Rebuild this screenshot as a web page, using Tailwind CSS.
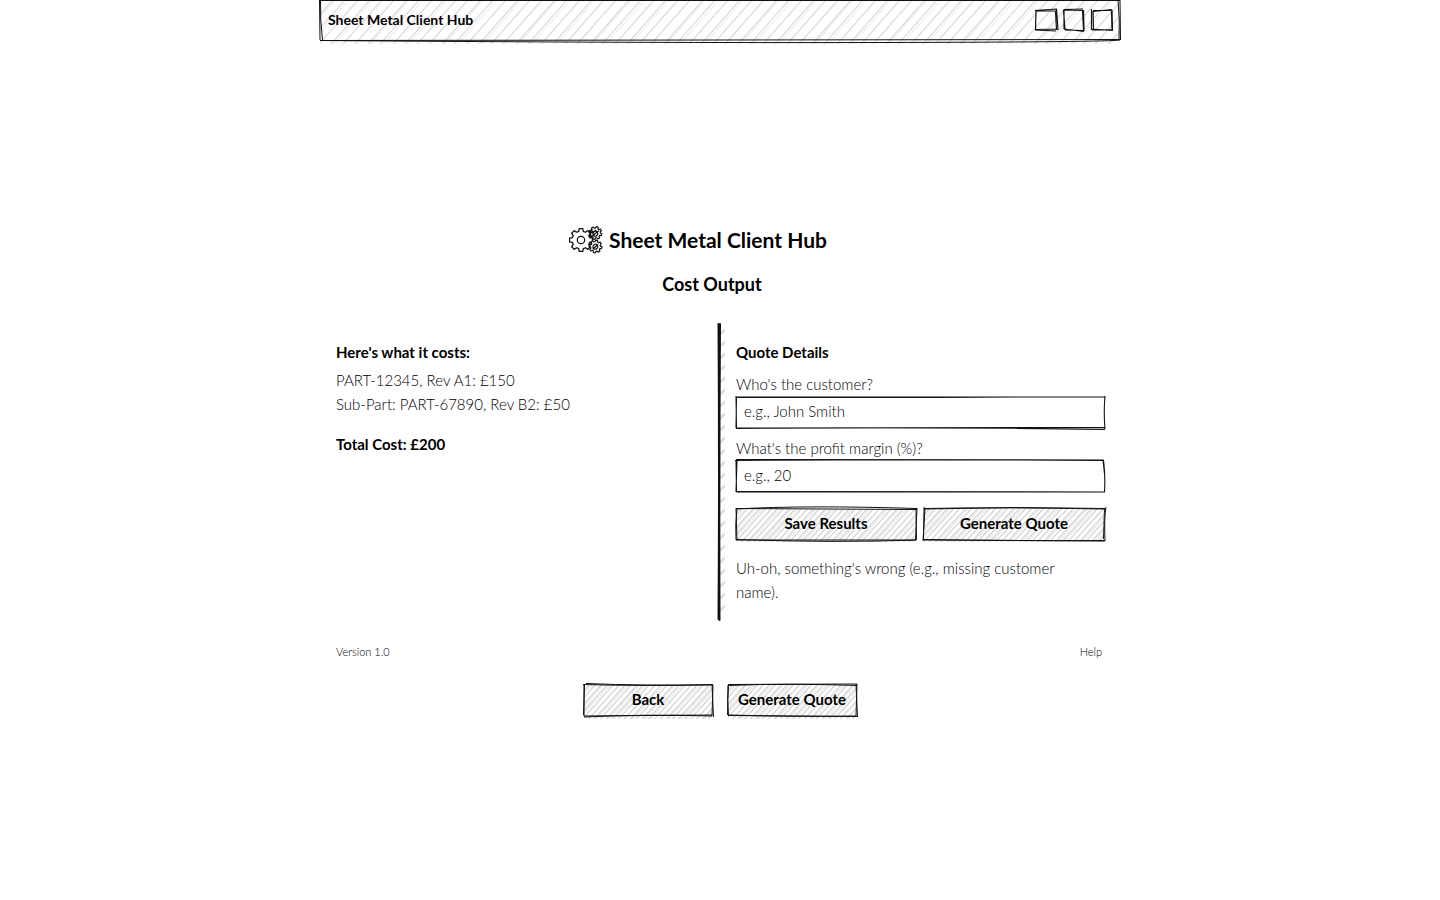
<!DOCTYPE html>
<html lang="en">
<head>
<meta charset="utf-8">
<meta name="viewport" content="width=device-width, initial-scale=1">
<title>Sheet Metal Client Hub</title>
<script src="https://cdn.jsdelivr.net/npm/@tailwindcss/browser@4"></script>
</head>
<body class="bg-white text-black font-['Lato','Open_Sans',sans-serif] text-[15px] leading-6 font-light">
<svg class="absolute w-0 h-0" aria-hidden="true">
  <defs>
    <!-- Pencil hatching: wide for the header, tight for buttons -->
    <pattern id="hatch-wide" width="74" height="84" patternUnits="userSpaceOnUse">
      <g stroke="#dadada" stroke-width="1.2" fill="none">
        <path d="M-74 84L0 0M-61 84L13 0M-49 84L25 0M-36 84L38 0M-24 84L50 0M-12 84L62 0M0 84L74 0M13 84L87 0M25 84L99 0M38 84L112 0M50 84L124 0M62 84L136 0M74 84L148 0"/>
        <path stroke="#f0f0f0" d="M-58 84L15 0M-46 84L29 0M-20 84L53 0M16 84L89 0M28 84L103 0M54 84L127 0"/>
      </g>
    </pattern>
    <pattern id="hatch-tight" width="36" height="40" patternUnits="userSpaceOnUse">
      <g stroke="#d2d2d2" stroke-width="1.2" fill="none">
        <path d="M-36 40L0 0M-30 40L6 0M-24 40L12 0M-18 40L18 0M-12 40L24 0M-6 40L30 0M0 40L36 0M6 40L42 0M12 40L48 0M18 40L54 0M24 40L60 0M30 40L66 0"/>
        <path stroke="#e8e8e8" d="M-28 40L9 0M-15 40L20 0M-10 40L27 0M8 40L45 0M21 40L56 0M26 40L63 0"/>
      </g>
    </pattern>
    <pattern id="ticks" width="16" height="12" patternUnits="userSpaceOnUse">
      <path d="M3 10L9 5M4 11L9 7" stroke="#c4c4c4" fill="none"/>
    </pattern>
  </defs>
</svg>

<div class="min-h-screen flex flex-col w-full max-w-[800px] mx-auto">
  <header class="relative h-10 px-2 flex items-center justify-between">
    <svg class="absolute inset-0 w-full h-full overflow-visible" aria-hidden="true">
      <rect y="1" width="100%" height="43" fill="url(#hatch-wide)"/>
      <svg width="100%" height="100%" viewBox="0 0 800 40" preserveAspectRatio="none" class="overflow-visible" fill="none" stroke="#111">
        <path vector-effect="non-scaling-stroke" d="M0 0.500L800 0.500M0.500 0Q0 20 2.500 40M-0.500 0L0 40M798 0Q800 20 799 40M800 0L800.500 40M0 40.500L800 39.500"/>
        <path vector-effect="non-scaling-stroke" d="M0 40.500Q330 43 560 42.500T800 40"/>
      </svg>
    </svg>
    <span class="relative font-bold text-sm">Sheet Metal Client Hub</span>
    <span class="relative flex gap-2" aria-hidden="true">
      <svg class="size-5 overflow-visible" viewBox="0 0 20 20" fill="none" stroke="#111" stroke-width="1.200"><path d="M-1 0.500L21 -1M0 1L20 1M0 0L-0.500 20M20.500 -1L22 20M19.500 1L20.500 20M-1 20L20 21M0 19.500L21 19"/></svg>
      <svg class="size-5 overflow-visible" viewBox="0 0 20 20" fill="none" stroke="#111" stroke-width="1.200"><path d="M-1 0L20 0.500M0 -0.500L19 -1M-0.500 0L1 20M0 1L0 19M19.500 0L20 21M18.500 0L19.500 20M0 19L20 21.500M1 20L20 20.500"/></svg>
      <svg class="size-5 overflow-visible" viewBox="0 0 20 20" fill="none" stroke="#111" stroke-width="1.200"><path d="M1 1.500L20 -0.500M1 0.500L19 0.500M-0.500 -1L-0.500 20M1 1L1.500 19M20 0L20.500 20M19.500 1L20 19M-1 19L21 20.500M0 20L20 19.500"/></svg>
    </span>
  </header>

  <main class="flex-1 flex flex-col justify-center">
    <h1 class="flex items-center justify-center gap-1.5 pr-11 text-[21px] leading-8 font-bold">
      <svg class="w-[34px] h-7" viewBox="0 0 34 28" fill="none" stroke="#111" stroke-linejoin="round" aria-hidden="true">
        <defs>
          <path id="gear" vector-effect="non-scaling-stroke" d="M8.200 -2.200L10.900 -1.700L10.900 1.700L8.200 2.200L7.400 4.200L8.900 6.500L6.500 8.900L4.200 7.400L2.200 8.200L1.700 10.900L-1.700 10.900L-2.200 8.200L-4.200 7.400L-6.500 8.900L-8.900 6.500L-7.400 4.200L-8.200 2.200L-10.900 1.700L-10.900 -1.700L-8.200 -2.200L-7.400 -4.200L-8.900 -6.500L-6.500 -8.900L-4.200 -7.400L-2.200 -8.200L-1.700 -10.900L1.700 -10.900L2.200 -8.200L4.200 -7.400L6.500 -8.900L8.900 -6.500L7.400 -4.200Z"/>
        </defs>
        <use href="#gear" stroke-width="1.300" transform="translate(12 14) scale(1.050)"/>
        <circle cx="12" cy="14" r="3.700" stroke-width="1.200"/>
        <g fill="#fff" stroke-width="1.200">
          <use href="#gear" transform="translate(26.500 7) rotate(15) scale(.58)"/>
          <use href="#gear" transform="translate(26.500 20.500) rotate(10) scale(.58)"/>
        </g>
        <path stroke-width="1.200" d="M24 9.500Q23.500 5.500 27 5Q30 7 28 9.500Q26 11 24 9.500M23.500 10L30 4.500M23 7L27 4M24 22.500Q23.500 18.500 27 18Q30 20 28 22.500Q26 24 24 22.500M24 23L29 18.500"/>
        <path stroke-width="1.600" d="M20.500 6L23 3.500M20.500 9L23.500 11M21 19L23 17.500M20.500 8L24 5"/>
      </svg>
      Sheet Metal Client Hub
    </h1>
    <h2 class="mt-3.5 pr-4 text-center text-lg leading-7 font-bold">Cost Output</h2>

    <div class="mt-[26px] grid grid-cols-2">
      <section class="p-4">
        <h3 class="font-bold">Here's what it costs:</h3>
        <ul class="mt-1">
          <li>PART-12345, Rev A1: £150</li>
          <li>Sub-Part: PART-67890, Rev B2: £50</li>
        </ul>
        <p class="mt-4 font-bold">Total Cost: £200</p>
      </section>

      <section class="relative p-4">
        <svg class="absolute -left-1 top-0 w-3 h-full overflow-visible" aria-hidden="true">
          <rect x="3" width="7" height="98%" fill="url(#ticks)"/>
          <svg width="12" height="100%" viewBox="0 0 12 296" preserveAspectRatio="none" class="overflow-visible" fill="none" stroke="#111">
            <path vector-effect="non-scaling-stroke" stroke-width="2" stroke-linecap="round" d="M2.500 0Q3.500 150 2.500 295M4 0Q3 150 3.500 296"/>
          </svg>
        </svg>
        <h3 class="font-bold">Quote Details</h3>
        <form>
          <label class="block mt-2" for="customer">Who's the customer?</label>
          <div class="relative h-8">
            <input id="customer" type="text" placeholder="e.g., John Smith" class="w-full h-full px-2 pb-0.5 bg-transparent outline-none placeholder:text-black">
            <svg class="absolute inset-0 w-full h-full overflow-visible pointer-events-none" viewBox="0 0 368 32" preserveAspectRatio="none" fill="none" stroke="#111" aria-hidden="true">
              <path vector-effect="non-scaling-stroke" stroke-width="1.100" d="M0 1.500L200 1.500L369 0.500M0 1L369 1M0 0L0.500 33M0.500 1L0 32M369 0Q367.500 16 369 33M0 32L369 31.500M0 32.500Q200 31 369 33.500"/>
            </svg>
          </div>
          <label class="block mt-2" for="margin">What's the profit margin (%)?</label>
          <div class="relative h-8">
            <input id="margin" type="text" placeholder="e.g., 20" class="w-full h-full px-2 pb-0.5 bg-transparent outline-none placeholder:text-black">
            <svg class="absolute inset-0 w-full h-full overflow-visible pointer-events-none" viewBox="0 0 368 32" preserveAspectRatio="none" fill="none" stroke="#111" aria-hidden="true">
              <path vector-effect="non-scaling-stroke" stroke-width="1.100" d="M-1 0.500Q180 -1 368 0.500M0 -0.500L368 0M0 0L0.500 32M1 0L0 32M367.500 0Q369.500 16 368.500 32M367 0L368.500 14M0 32L369 32M0 31.500L369 32"/>
            </svg>
          </div>
          <div class="mt-4 grid grid-cols-2 gap-2">
            <button type="button" class="relative h-8 pb-0.5 font-bold cursor-pointer">
              <svg class="absolute inset-0 w-full h-full overflow-visible" aria-hidden="true">
                <rect y="1" width="100%" height="33" fill="url(#hatch-tight)"/>
                <svg width="100%" height="100%" viewBox="0 0 180 32" preserveAspectRatio="none" class="overflow-visible" fill="none" stroke="#111">
                  <path vector-effect="non-scaling-stroke" d="M0 0.500L181 1.500M0 1Q70 -3 181 0.500M0 0L1 32M1 1Q-1 16 0 32M181 0L179.500 32M180 1L180.500 32M0 32L180 32M0 31.500Q100 35 180 32"/>
                </svg>
              </svg>
              <span class="relative">Save Results</span>
            </button>
            <button type="button" class="relative h-8 pb-0.5 font-bold cursor-pointer">
              <svg class="absolute inset-0 w-full h-full overflow-visible" aria-hidden="true">
                <rect y="1" width="100%" height="33" fill="url(#hatch-tight)"/>
                <svg width="100%" height="100%" viewBox="0 0 180 32" preserveAspectRatio="none" class="overflow-visible" fill="none" stroke="#111">
                  <path vector-effect="non-scaling-stroke" d="M0 0.500Q80 -1 181 1M0 1L90 -0.500L181 0.500M0 -1L-0.500 32M1 0L-1 33M182 -1Q180 10 181 33M180.500 0L179.500 31M-1 32L181 33M0 31.500Q100 33 181 32.500"/>
                </svg>
              </svg>
              <span class="relative">Generate Quote</span>
            </button>
          </div>
          <p class="mt-4 pr-8">Uh-oh, something's wrong (e.g., missing customer name).</p>
        </form>
      </section>
    </div>

    <footer class="mt-6 pl-4 pr-[18px] flex justify-between text-[11px] leading-4">
      <span>Version 1.0</span>
      <a href="#help">Help</a>
    </footer>

    <div class="mt-6 flex justify-center gap-4">
      <button type="button" class="relative h-8 w-32 pb-0.5 font-bold cursor-pointer">
        <svg class="absolute inset-0 w-full h-full overflow-visible" aria-hidden="true">
          <rect y="1" width="100%" height="34" fill="url(#hatch-tight)"/>
          <svg width="100%" height="100%" viewBox="0 0 128 32" preserveAspectRatio="none" class="overflow-visible" fill="none" stroke="#111">
            <path vector-effect="non-scaling-stroke" d="M-1 0.500Q50 2 129 1M2 -0.500Q60 2 129 0.500M0 0L0 32M0.500 1L-0.500 31M128 0L129.500 33M129 1L128 32M0 33Q60 30 128 32M0 32L128 31"/>
          </svg>
        </svg>
        <span class="relative">Back</span>
      </button>
      <button type="button" class="relative h-8 w-32 pb-0.5 font-bold cursor-pointer">
        <svg class="absolute inset-0 w-full h-full overflow-visible" aria-hidden="true">
          <rect y="1" width="100%" height="34" fill="url(#hatch-tight)"/>
          <svg width="100%" height="100%" viewBox="0 0 128 32" preserveAspectRatio="none" class="overflow-visible" fill="none" stroke="#111">
            <path vector-effect="non-scaling-stroke" d="M0 0.500L129 0M0 1.500Q60 -1 129 1.500M0.500 0Q-1 16 0.500 32M0 1L-0.500 31M128 0L129.500 33M129 0L128 32M0 31.500L129 32.500M1 31Q70 33 128 32"/>
          </svg>
        </svg>
        <span class="relative">Generate Quote</span>
      </button>
    </div>
  </main>
</div>
</body>
</html>
